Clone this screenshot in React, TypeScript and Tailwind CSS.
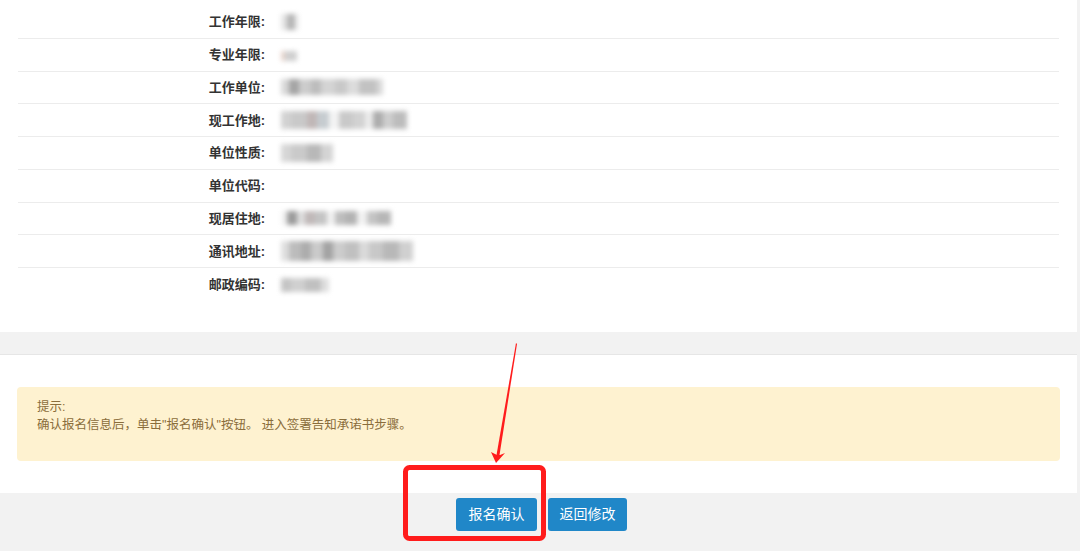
import React from "react";

type Block = { w: number; c: string };
type Row = { label: string; blocks: Block[]; h?: number; dy?: number; dx?: number };

const rows: Row[] = [
  { label: "工作年限", blocks: [{ w: 6, c: "#e4e4e4" }, { w: 8, c: "#b4b4b4" }, { w: 4, c: "#eeeeee" }], h: 16, dy: 0 },
  { label: "专业年限", blocks: [{ w: 4, c: "#e8d4cc" }, { w: 12, c: "#cfcfcf" }], h: 10, dy: 2 },
  {
    label: "工作单位",
    blocks: [
      { w: 8, c: "#d8d8d8" }, { w: 10, c: "#a4a4a4" }, { w: 12, c: "#cccccc" }, { w: 10, c: "#bcbcbc" },
      { w: 14, c: "#d4d4d4" }, { w: 12, c: "#c8c8c8" }, { w: 12, c: "#dcdcdc" }, { w: 18, c: "#c2c2c2" },
      { w: 6, c: "#dadada" },
    ],
    h: 16,
  },
  {
    label: "现工作地",
    blocks: [
      { w: 10, c: "#d2d2d2" }, { w: 16, c: "#c9c9c9" }, { w: 10, c: "#c0b6b6" }, { w: 12, c: "#c6ccd0" },
      { w: 10, c: "#f4f4f4" }, { w: 14, c: "#c9c9c9" }, { w: 12, c: "#d2d2d2" }, { w: 8, c: "#ececec" },
      { w: 10, c: "#acacac" }, { w: 10, c: "#cecece" }, { w: 14, c: "#bcbcbc" },
    ],
    h: 18,
  },
  {
    label: "单位性质",
    blocks: [{ w: 10, c: "#d6d6d6" }, { w: 16, c: "#cacaca" }, { w: 14, c: "#b8b8b8" }, { w: 12, c: "#d4d4d4" }],
    h: 18,
  },
  { label: "单位代码", blocks: [] },
  {
    label: "现居住地",
    blocks: [
      { w: 6, c: "#f2f2f2" }, { w: 10, c: "#9a9a9a" }, { w: 8, c: "#dedede" }, { w: 10, c: "#c0b8b8" },
      { w: 12, c: "#c4c4c4" }, { w: 8, c: "#f2f2f2" }, { w: 10, c: "#bebebe" }, { w: 12, c: "#b2b2b2" },
      { w: 10, c: "#f2f2f2" }, { w: 10, c: "#c4c4c4" }, { w: 14, c: "#b6b6b6" },
    ],
    h: 14,
  },
  {
    label: "通讯地址",
    blocks: [
      { w: 8, c: "#dedede" }, { w: 12, c: "#bcbcbc" }, { w: 10, c: "#acacac" }, { w: 12, c: "#cacaca" },
      { w: 10, c: "#a2a2a2" }, { w: 12, c: "#cccccc" }, { w: 14, c: "#c0c0c0" }, { w: 10, c: "#dadada" },
      { w: 14, c: "#c8c8c8" }, { w: 16, c: "#b8b8b8" }, { w: 14, c: "#d0d0d0" },
    ],
    h: 20,
  },
  {
    label: "邮政编码",
    blocks: [{ w: 10, c: "#c4c4c4" }, { w: 14, c: "#d0d0d0" }, { w: 16, c: "#c0c0c0" }, { w: 8, c: "#dedede" }],
    h: 14,
    dy: 2,
  },
];

export default function App() {
  return (
    <div
      className="relative w-[1080px] h-[551px] overflow-hidden bg-[#f2f2f2]"
      style={{ fontFamily: '"Liberation Sans", "Noto Sans CJK SC", sans-serif' }}
    >
      {/* info panel */}
      <div className="w-[1077px] h-[332px] bg-white pt-[6px] px-[18px]">
        {rows.map((r, i) => (
          <div
            key={r.label}
            className={`flex items-center h-[32.75px] ${i < rows.length - 1 ? "border-b border-[#ececec]" : ""}`}
          >
            <div className="w-[247px] text-right text-[13px] font-bold text-[#333333] leading-none">{r.label}:</div>
            <div className="pl-[16px] flex items-center">
              <div className="flex blur-[2.5px]" style={{ height: r.h ?? 12, marginTop: r.dy ?? 0 }}>
                {r.blocks.map((b, j) => (
                  <div key={j} style={{ width: b.w, backgroundColor: b.c }} />
                ))}
              </div>
            </div>
          </div>
        ))}
      </div>

      <div className="h-[22px]" />

      {/* tip panel */}
      <div className="w-[1077px] h-[139px] bg-white border-t border-[#e6e6e6] pt-[32px] px-[17px]">
        <div className="h-[74px] rounded-[4px] bg-[#fef2d0] pl-[20px] pt-[11px] text-[12.5px] leading-[18px] text-[#8a6d3b]">
          <div>提示:</div>
          <div>确认报名信息后，单击"报名确认"按钮。 进入签署告知承诺书步骤。</div>
        </div>
      </div>

      {/* buttons */}
      <div className="w-[1077px] flex justify-center gap-[11px] pt-[5px] pl-[6px]">
        <button className="w-[81px] h-[33px] rounded-[3px] bg-[#2087c8] text-white text-[14px]">报名确认</button>
        <button className="w-[79px] h-[33px] rounded-[3px] bg-[#2087c8] text-white text-[14px]">返回修改</button>
      </div>

      {/* annotation overlay */}
      <svg className="absolute left-0 top-0 pointer-events-none" width="1080" height="551" viewBox="0 0 1080 551">
        <rect x="405.5" y="467.5" width="138" height="71" rx="4" fill="none" stroke="#ff1c1c" strokeWidth="5" />
        <polygon points="516,343 517,344 499.5,455 496.5,455" fill="#ff1c1c" />
        <polygon points="496,463 491,452 497,455 500,455 505,453" fill="#ff1c1c" />
      </svg>
    </div>
  );
}
